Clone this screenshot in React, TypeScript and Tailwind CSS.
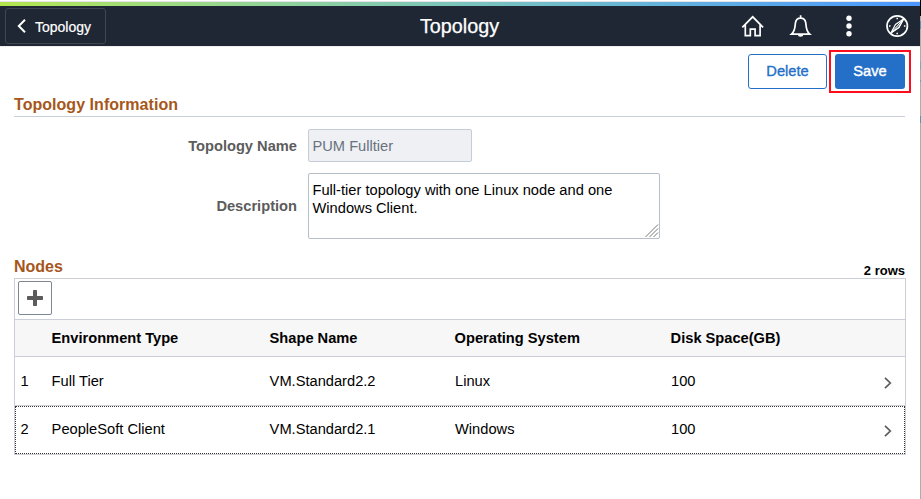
import React from "react";
import type { ReactNode } from "react";

type NodeRow = { id: number; env: string; shape: string; os: string; disk: string };

const rows: NodeRow[] = [
  { id: 1, env: "Full Tier", shape: "VM.Standard2.2", os: "Linux", disk: "100" },
  { id: 2, env: "PeopleSoft Client", shape: "VM.Standard2.1", os: "Windows", disk: "100" },
];

const columns = "grid grid-cols-[37px_218px_185px_216px_1fr] items-center";

function Icon({ size, children }: { size: number; children: ReactNode }) {
  return (
    <svg width={size} height={size} viewBox={`0 0 ${size} ${size}`} fill="none" stroke="#fff" strokeWidth="1.7">
      {children}
    </svg>
  );
}

function Header() {
  return (
    <header className="grid h-10 grid-cols-[1fr_auto_1fr] items-center bg-[#1e2733] text-white">
      <button className="ml-[5px] flex h-9 w-[101px] items-center rounded-[3px] border border-[#3d4651] pl-[11px] text-[14px]">
        <svg width="9" height="14" viewBox="0 0 9 14" fill="none" stroke="#fff" strokeWidth="2" className="mr-[9px]">
          <path d="M8 0.7 1.8 7 8 13.3" />
        </svg>
        <span className="mt-[2px] [-webkit-text-stroke:.2px]">Topology</span>
      </button>
      <h1 className="mr-px text-[19.8px] leading-6 [-webkit-text-stroke:.25px]">Topology</h1>
      <div className="flex items-center justify-end gap-6 pr-[11px]">
        <Icon size={24}>
          <path d="M1.300 13.300 11.700 2.800 22.100 13.300M4.300 11V21.700h5v-6.500h4.800v6.500h5V11" />
        </Icon>
        <Icon size={24}>
          <path d="M2.500 20.200C6.200 17 5.900 13 6.400 9.200 6.800 5.800 8.600 4.200 11.600 4.200s4.800 1.600 5.200 5c.5 3.800.2 7.800 3.900 11ZM11.600 4.200V1.200" />
          <path d="M8.900 20.800a2.700 2 0 0 0 5.400 0Z" fill="#fff" stroke="none" />
        </Icon>
        <Icon size={24}>
          <g fill="#fff" stroke="none">
            <circle cx="12" cy="4.200" r="2.700" />
            <circle cx="12" cy="12" r="2.700" />
            <circle cx="12" cy="19.800" r="2.700" />
          </g>
        </Icon>
        <Icon size={24}>
          <circle cx="12.200" cy="12" r="10.200" />
          <path d="M5.900 19 10.500 10.500 18.600 5 14 13.500Z" strokeWidth="1.200" />
          <path d="M5.900 19 18.600 5 14 13.500Z" fill="#fff" fillOpacity=".35" strokeWidth="1" />
          <path d="M12.200 3.800v1.500M12.200 18.700v1.500M4 12h1.500M18.900 12h1.500" strokeWidth="1.500" />
        </Icon>
      </div>
    </header>
  );
}

function NodesTable() {
  return (
    <section className="ml-[14px] w-[892px] text-black">
      <div className="flex h-5 items-end justify-between">
        <h2 className="text-[16px] leading-[22px] font-bold text-[#a6561a]">Nodes</h2>
        <span className="mr-px -mb-px text-[13px] leading-4 font-bold">2 rows</span>
      </div>
      <div className="h-[177px] border border-[#cccfd8]">
        <div className="h-10 pt-[2px] pl-[3px]">
          <button className="flex h-[34px] w-[34px] items-center justify-center rounded-[2px] border border-[#7d8794]">
            <svg width="16" height="16" viewBox="0 0 16 16" fill="#5c5c5c">
              <rect y="6" width="16" height="4" rx=".7" />
              <rect x="6" width="4" height="16" rx=".7" />
            </svg>
          </button>
        </div>
        <div className={`${columns} h-[38px] border-y border-[#cccfd8] bg-[#f7f7f7] pt-[2px] text-[14.65px] font-bold`}>
          <span />
          <span className="-ml-[.4px]">Environment Type</span>
          <span className="-ml-[.4px]">Shape Name</span>
          <span className="-ml-[.4px]">Operating System</span>
          <span className="-ml-[.4px]">Disk Space(GB)</span>
        </div>
        {rows.map((r, i) => (
          <div
            key={r.id}
            className={`${columns} text-[14.67px] ${i === 0 ? "h-[49px] border-b border-[#cccfd8]" : "h-12 border border-dotted border-[#333] pb-[2px]"}`}
          >
            <span className={i === 0 ? "pl-[5.6px]" : "pl-[4.6px]"}>{r.id}</span>
            <span className={i === 0 ? "-ml-[.4px]" : "-ml-[1.4px]"}>{r.env}</span>
            <span className={i === 0 ? "-ml-[.4px]" : "-ml-[1.4px]"}>{r.shape}</span>
            <span className={i === 0 ? "" : "-ml-px"}>{r.os}</span>
            <span className={`flex items-center justify-between ${i === 0 ? "" : "-ml-px"}`}>
              {r.disk}
              <svg width="8" height="12" viewBox="0 0 8 12" fill="none" stroke="#5c5c5c" strokeWidth="1.700" className={i === 0 ? "mt-[4px] mr-[13px]" : "mt-[3px] mr-3"}>
                <path d="m1 .8 5.300 5.200L1 11.200" />
              </svg>
            </span>
          </div>
        ))}
      </div>
    </section>
  );
}

function EdgeStrip() {
  return (
    <div className="flex w-px flex-col bg-[#adadad]">
      <div className="h-4 bg-black" />
      <div className="mt-[5px] h-2 bg-[#4d9bb0]" />
      <div className="mt-[32px] h-[9px] bg-[#7fa9b5]" />
      <div className="mt-[10px] h-[2px] bg-[#6aa5b5]" />
      <div className="mt-[34px] h-[7px] bg-[#4d9bb0]" />
    </div>
  );
}

export default function App() {
  return (
    <div className="flex h-[499px] w-[921px] overflow-hidden bg-white font-['Liberation_Sans',Arial,sans-serif]">
      <main className="w-[920px]">
        <div className="h-[2px] border-b border-[#e5e5e8] bg-white" />
        <div className="h-1 bg-linear-to-r from-[#b3e64c] to-[#4c97ff]" />
        <Header />
        <div className="flex h-[48px] items-start justify-end border-t border-[#eeeeee] pt-[3px] pr-[9px]">
          <button className="mt-[4px] h-[35px] w-[79px] rounded-[3px] border border-[#246fc8] pb-[2px] text-[14.67px] text-[#246fc8] [-webkit-text-stroke:.35px]">Delete</button>
          <div className="ml-[2px] flex h-[43px] w-[82px] items-center justify-center border-2 border-[#ff0d1d]">
            <button className="h-[35px] w-[70px] rounded-[3px] bg-[#246fc8] pb-[2px] text-[14.67px] text-white [-webkit-text-stroke:.4px]">Save</button>
          </div>
        </div>
        <h2 className="ml-[14px] h-[23px] w-[891px] border-b border-[#c9cfd7] text-[16px] leading-[21px] font-bold tracking-[.04px] text-[#a6561a]">Topology Information</h2>
        <form className="h-[141px] pt-3 text-[14.67px]">
          <div className="flex h-[33px] items-center">
            <label className="mr-[11px] w-[297px] text-right font-bold text-[#5c5c5c]">Topology Name</label>
            <div className="flex h-[33px] w-[164px] items-center rounded-[2px] border border-[#c3ccd7] bg-[#eef0f3] pt-px pl-[3.5px] text-[#68727e]">PUM Fulltier</div>
          </div>
          <div className="mt-[11px] flex h-[66px] items-center">
            <label className="mr-[11px] w-[297px] text-right font-bold text-[#5c5c5c]">Description</label>
            <div className="flex h-[66px] w-[352px] items-end justify-between rounded-[2px] border border-[#b4bfca] pl-[3.5px] leading-[18px]">
              <p className="w-[310px] self-start pt-[7px]">Full-tier topology with one Linux node and one Windows Client.</p>
              <svg width="15" height="15" viewBox="0 0 15 15" stroke="#777">
                <path d="M1.500 14 14 1.500M5.500 14 14 5.500M9.500 14 14 9.500" />
              </svg>
            </div>
          </div>
        </form>
        <NodesTable />
      </main>
      <EdgeStrip />
    </div>
  );
}
